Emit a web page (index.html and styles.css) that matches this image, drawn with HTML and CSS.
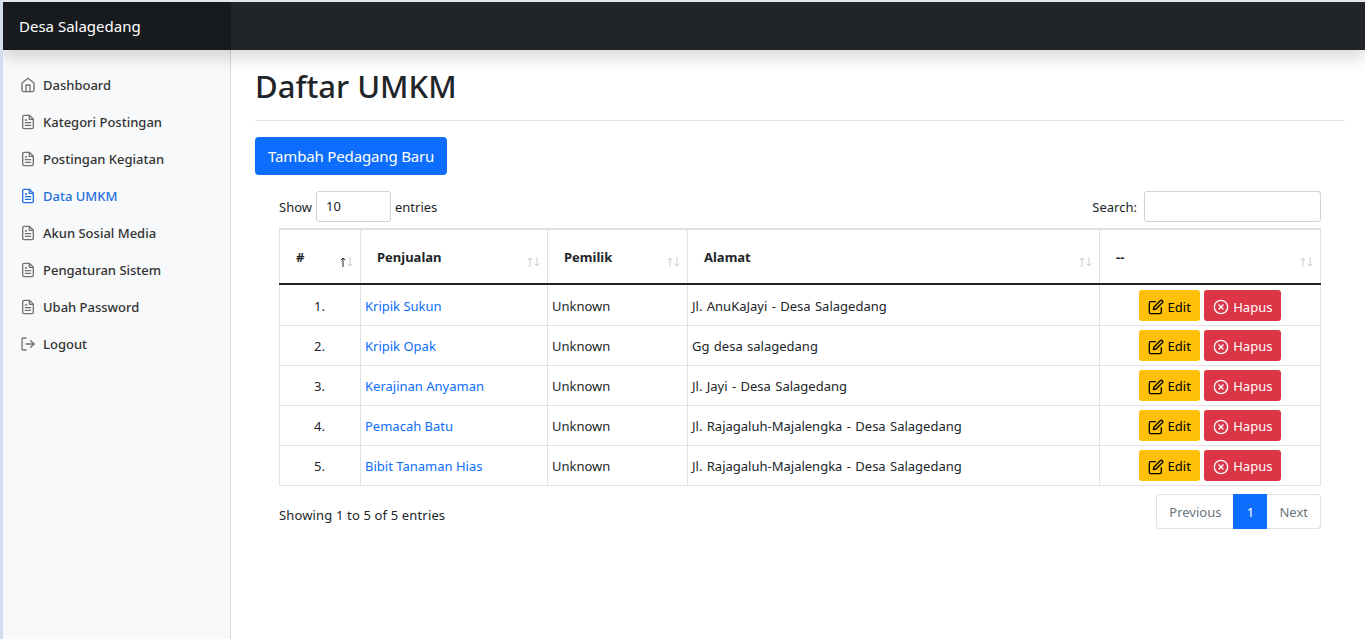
FILE: index.html
```html
<!DOCTYPE html>
<html lang="en">

<head>
    <meta charset="UTF-8">
    <meta name="viewport" content="width=device-width, initial-scale=1.0">
    <title>Daftar UMKM</title>
    <link rel="stylesheet" href="styles.css">
</head>

<body>
    <svg class="icon-defs" width="0" height="0">
        <symbol id="i-home" viewBox="0 0 24 24" fill="none" stroke="currentColor" stroke-width="2" stroke-linecap="round" stroke-linejoin="round">
            <path d="M3 9l9-7 9 7v11a2 2 0 0 1-2 2H5a2 2 0 0 1-2-2z"></path>
            <path d="M9 22V12h6v10"></path>
        </symbol>
        <symbol id="i-file" viewBox="0 0 24 24" fill="none" stroke="currentColor" stroke-width="2" stroke-linecap="round" stroke-linejoin="round">
            <path d="M14 2H6a2 2 0 0 0-2 2v16a2 2 0 0 0 2 2h12a2 2 0 0 0 2-2V8z"></path>
            <path d="M14 2v6h6"></path>
            <path d="M16 13H8"></path>
            <path d="M16 17H8"></path>
            <path d="M10 9H8"></path>
        </symbol>
        <symbol id="i-logout" viewBox="0 0 24 24" fill="none" stroke="currentColor" stroke-width="2" stroke-linecap="round" stroke-linejoin="round">
            <path d="M9 21H5a2 2 0 0 1-2-2V5a2 2 0 0 1 2-2h4"></path>
            <path d="M16 17l5-5-5-5"></path>
            <path d="M21 12H9"></path>
        </symbol>
        <symbol id="i-edit" viewBox="0 0 24 24" fill="none" stroke="currentColor" stroke-width="2" stroke-linecap="round" stroke-linejoin="round">
            <path d="M11 4H4a2 2 0 0 0-2 2v14a2 2 0 0 0 2 2h14a2 2 0 0 0 2-2v-7"></path>
            <path d="M18.5 2.5a2.121 2.121 0 0 1 3 3L12 15l-4 1 1-4 9.5-9.5z"></path>
        </symbol>
        <symbol id="i-x" viewBox="0 0 24 24" fill="none" stroke="currentColor" stroke-width="2" stroke-linecap="round" stroke-linejoin="round">
            <circle cx="12" cy="12" r="10"></circle>
            <path d="M15 9l-6 6"></path>
            <path d="M9 9l6 6"></path>
        </symbol>
        <symbol id="i-sort" viewBox="0 0 13 10" fill="none">
            <path class="sort-up" d="M3 10V1M.8 3.2L3 1l2.2 2.2"></path>
            <path d="M10 0v9M7.8 6.8L10 9l2.2-2.2"></path>
        </symbol>
    </svg>

    <header class="navbar">
        <a class="brand" href="#">Desa Salagedang</a>
    </header>

    <div class="page">
        <nav class="sidebar">
            <a class="side-link" href="#"><svg class="side-icon"><use href="#i-home"></use></svg>Dashboard</a>
            <a class="side-link" href="#"><svg class="side-icon"><use href="#i-file"></use></svg>Kategori Postingan</a>
            <a class="side-link" href="#"><svg class="side-icon"><use href="#i-file"></use></svg>Postingan Kegiatan</a>
            <a class="side-link active" href="#"><svg class="side-icon"><use href="#i-file"></use></svg>Data UMKM</a>
            <a class="side-link" href="#"><svg class="side-icon"><use href="#i-file"></use></svg>Akun Sosial Media</a>
            <a class="side-link" href="#"><svg class="side-icon"><use href="#i-file"></use></svg>Pengaturan Sistem</a>
            <a class="side-link" href="#"><svg class="side-icon"><use href="#i-file"></use></svg>Ubah Password</a>
            <a class="side-link" href="#"><svg class="side-icon"><use href="#i-logout"></use></svg>Logout</a>
        </nav>

        <main class="content">
            <h1 class="page-title">Daftar UMKM</h1>
            <a class="btn-add" href="#">Tambah Pedagang Baru</a>

            <div class="table-wrap">
                <div class="table-top">
                    <label class="top-field"><span class="top-label">Show</span><span class="length-select">10</span><span class="top-label">entries</span></label>
                    <label class="top-field"><span class="top-label">Search:</span><input type="text"></label>
                </div>

                <table class="data-table">
                    <thead>
                        <tr>
                            <th class="col-no">#<svg class="sort sorted"><use href="#i-sort"></use></svg></th>
                            <th class="col-name">Penjualan<svg class="sort"><use href="#i-sort"></use></svg></th>
                            <th class="col-owner">Pemilik<svg class="sort"><use href="#i-sort"></use></svg></th>
                            <th class="col-address">Alamat<svg class="sort"><use href="#i-sort"></use></svg></th>
                            <th class="col-action">--<svg class="sort"><use href="#i-sort"></use></svg></th>
                        </tr>
                    </thead>
                    <tbody>
                        <tr>
                            <td class="no">1.</td>
                            <td><a href="#">Kripik Sukun</a></td>
                            <td>Unknown</td>
                            <td class="address">Jl. AnuKaJayi - Desa Salagedang</td>
                            <td class="actions">
                                <a class="btn btn-edit" href="#"><svg class="btn-icon"><use href="#i-edit"></use></svg>Edit</a>
                                <a class="btn btn-del" href="#"><svg class="btn-icon"><use href="#i-x"></use></svg>Hapus</a>
                            </td>
                        </tr>
                        <tr>
                            <td class="no">2.</td>
                            <td><a href="#">Kripik Opak</a></td>
                            <td>Unknown</td>
                            <td class="address">Gg desa salagedang</td>
                            <td class="actions">
                                <a class="btn btn-edit" href="#"><svg class="btn-icon"><use href="#i-edit"></use></svg>Edit</a>
                                <a class="btn btn-del" href="#"><svg class="btn-icon"><use href="#i-x"></use></svg>Hapus</a>
                            </td>
                        </tr>
                        <tr>
                            <td class="no">3.</td>
                            <td><a href="#">Kerajinan Anyaman</a></td>
                            <td>Unknown</td>
                            <td class="address">Jl. Jayi - Desa Salagedang</td>
                            <td class="actions">
                                <a class="btn btn-edit" href="#"><svg class="btn-icon"><use href="#i-edit"></use></svg>Edit</a>
                                <a class="btn btn-del" href="#"><svg class="btn-icon"><use href="#i-x"></use></svg>Hapus</a>
                            </td>
                        </tr>
                        <tr>
                            <td class="no">4.</td>
                            <td><a href="#">Pemacah Batu</a></td>
                            <td>Unknown</td>
                            <td class="address">Jl. Rajagaluh-Majalengka - Desa Salagedang</td>
                            <td class="actions">
                                <a class="btn btn-edit" href="#"><svg class="btn-icon"><use href="#i-edit"></use></svg>Edit</a>
                                <a class="btn btn-del" href="#"><svg class="btn-icon"><use href="#i-x"></use></svg>Hapus</a>
                            </td>
                        </tr>
                        <tr>
                            <td class="no">5.</td>
                            <td><a href="#">Bibit Tanaman Hias</a></td>
                            <td>Unknown</td>
                            <td class="address">Jl. Rajagaluh-Majalengka - Desa Salagedang</td>
                            <td class="actions">
                                <a class="btn btn-edit" href="#"><svg class="btn-icon"><use href="#i-edit"></use></svg>Edit</a>
                                <a class="btn btn-del" href="#"><svg class="btn-icon"><use href="#i-x"></use></svg>Hapus</a>
                            </td>
                        </tr>
                    </tbody>
                </table>

                <div class="table-bottom">
                    <div class="info">Showing 1 to 5 of 5 entries</div>
                    <div class="pager">
                        <a class="pager-item" href="#">Previous</a>
                        <a class="pager-item current" href="#">1</a>
                        <a class="pager-item" href="#">Next</a>
                    </div>
                </div>
            </div>
        </main>
    </div>
</body>

</html>
```

FILE: styles.css
```css
* {
    box-sizing: border-box;
}

body {
    font-family: "Noto Sans", "Open Sans", sans-serif;
    font-size: 14px;
    color: #212529;
    background-color: #fff;
    margin: 0;
    border-top: 2px solid #e6e6e6;
    border-left: 3px solid #d2deef;
    height: 639px;
    overflow: hidden;
}

a {
    text-decoration: none;
}

.icon-defs {
    position: absolute;
}

.navbar {
    height: 48px;
    background-color: #212529;
    box-shadow: 0 8px 16px rgba(0, 0, 0, 0.15);
    position: relative;
    z-index: 2;
}

.brand {
    display: block;
    width: 228px;
    height: 48px;
    line-height: 48px;
    padding-left: 16px;
    font-size: 15px;
    color: #fff;
    background-color: rgba(0, 0, 0, 0.25);
}

.page {
    display: flex;
    height: 589px;
}

.sidebar {
    width: 228px;
    flex: none;
    padding-top: 16px;
    background-color: #f8f9fa;
    border-right: 1px solid #d8d8d8;
}

.side-link {
    display: flex;
    align-items: center;
    height: 37px;
    padding-left: 17px;
    font-size: 13px;
    font-weight: 500;
    color: #333;
}

.side-link.active {
    color: #2470dc;
}

.side-icon {
    width: 16px;
    height: 16px;
    margin-right: 7px;
    color: #727272;
}

.side-link.active .side-icon {
    color: #2470dc;
}

.content {
    flex: 1;
    padding: 0 20px 0 24px;
}

.page-title {
    margin: 0 0 16px;
    padding: 17px 0 15px;
    font-size: 31px;
    font-weight: 500;
    line-height: 38px;
    border-bottom: 1px solid #dee2e6;
}

.btn-add {
    display: inline-block;
    height: 38px;
    line-height: 38px;
    padding: 0 13px;
    font-size: 15px;
    letter-spacing: -0.15px;
    color: #fff;
    background-color: #0d6efd;
    border-radius: 4px;
}

.table-wrap {
    padding: 16px 24px 0;
}

.table-top {
    display: flex;
    justify-content: space-between;
    height: 31px;
    margin-bottom: 6px;
    font-size: 13px;
}

.top-field {
    display: flex;
    align-items: center;
    gap: 4px;
}

.top-label {
    padding-top: 1px;
}

.length-select {
    width: 75px;
    height: 31px;
    line-height: 29px;
    padding-left: 9px;
    border: 1px solid #ced4da;
    border-radius: 3px;
}

.top-field input {
    width: 177px;
    height: 31px;
    margin-left: 3px;
    border: 1px solid #ced4da;
    border-radius: 3px;
}

.data-table {
    width: 100%;
    table-layout: fixed;
    border-collapse: collapse;
    font-size: 13px;
    border-top: 2px solid #dee2e6;
}

.data-table th,
.data-table td {
    border: 1px solid #dee2e6;
}

.data-table th {
    position: relative;
    height: 55px;
    padding: 1px 16px 0;
    text-align: left;
    font-weight: 700;
    font-size: 13px;
    border-top: 0;
    border-bottom: 2px solid #212529;
}

.col-no {
    width: 81px;
}

.col-name {
    width: 187px;
}

.col-owner {
    width: 140px;
}

.col-address {
    width: 412px;
}

.sort {
    position: absolute;
    right: 7px;
    bottom: 16px;
    width: 13px;
    height: 10px;
    stroke: #c9cccf;
    stroke-width: 1;
}

.sort-up {
    stroke: var(--sort-up, #c9cccf);
}

.sorted {
    --sort-up: #212529;
}

.data-table td {
    height: 40px;
    padding: 2px 4px 0;
}

.data-table tbody tr:first-child td {
    height: 41px;
}

.data-table td a {
    color: #0d6efd;
}

.data-table td.no {
    text-align: right;
    padding-right: 35px;
}

.data-table td.address {
    word-spacing: 1px;
}

.data-table td.actions {
    padding-top: 0;
    text-align: center;
    white-space: nowrap;
}

.data-table tbody tr:first-child td.actions {
    padding-top: 2px;
}

.btn {
    display: inline-flex;
    align-items: center;
    height: 31px;
    padding: 2px 9px 0;
    border-radius: 3px;
    vertical-align: middle;
}

.data-table td a.btn-edit {
    color: #000;
    background-color: #ffc107;
}

.data-table td a.btn-del {
    color: #fff;
    background-color: #dc3545;
    margin-left: 1px;
}

.btn-icon {
    width: 16px;
    height: 16px;
    margin-right: 4px;
    margin-top: 1px;
}

.table-bottom {
    display: flex;
    justify-content: space-between;
    margin-top: 8px;
    font-size: 13px;
}

.info {
    padding-top: 12px;
    letter-spacing: 0.15px;
}

.pager {
    display: flex;
    height: 35px;
}

.pager-item {
    padding: 0 12px;
    line-height: 34px;
    color: #6c757d;
    border: 1px solid #dee2e6;
}

.pager-item:first-child {
    border-radius: 4px 0 0 4px;
    border-right: 0;
}

.pager-item:last-child {
    border-radius: 0 4px 4px 0;
    border-left: 0;
}

.pager-item.current {
    width: 34px;
    padding: 0;
    text-align: center;
    color: #fff;
    background-color: #0d6efd;
    border-color: #0d6efd;
}
```
